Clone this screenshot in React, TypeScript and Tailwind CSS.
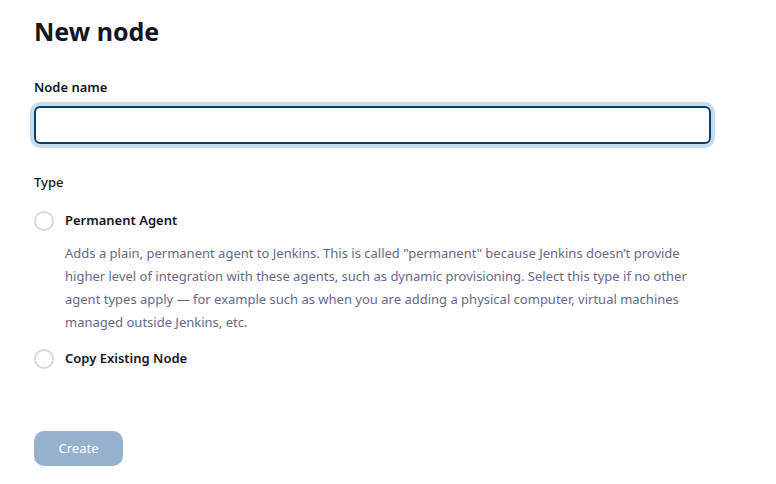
import React, { useState } from "react";

const Radio: React.FC<{ checked: boolean; onClick: () => void; label: string }> = ({
  checked,
  onClick,
  label,
}) => (
  <label className="flex items-center gap-[11px] cursor-pointer" onClick={onClick}>
    <span
      className={`w-[20px] h-[20px] rounded-full border-2 ${
        checked ? "border-[#0b4a75] border-[6px]" : "border-[#d3dbe0]"
      } bg-white`}
    />
    <span className="text-[13px] font-semibold text-[#14141f]">{label}</span>
  </label>
);

export default function App() {
  const [name, setName] = useState("");
  const [type, setType] = useState<string | null>(null);

  return (
    <div className="min-h-screen bg-white px-[34px] pt-[14px] font-['Noto_Sans',sans-serif] text-[#14141f]">
      <h1 className="text-[25px] font-bold leading-[34px]">New node</h1>

      <div className="mt-[29px]">
        <label className="block text-[13px] font-semibold leading-[20px]">Node name</label>
        <input
          autoFocus
          value={name}
          onChange={(e) => setName(e.target.value)}
          className="mt-[9px] block w-[677px] h-[38px] rounded-[6px] border-2 border-[#0b3f63] px-[8px] text-[14px] outline-none ring-[4px] ring-[#c6dcef]"
        />
      </div>

      <div className="mt-[28px]">
        <div className="text-[13px] font-medium leading-[20px]">Type</div>
        <div className="mt-[19px] flex flex-col">
          <Radio checked={type === "perm"} onClick={() => setType("perm")} label="Permanent Agent" />
          <p className="ml-[31px] mt-[11px] w-[640px] text-[13px] leading-[23px] text-[#68688a]">
            Adds a plain, permanent agent to Jenkins. This is called "permanent" because Jenkins
            doesn’t provide higher level of integration with these agents, such as dynamic
            provisioning. Select this type if no other agent types apply — for example such as when
            you are adding a physical computer, virtual machines managed outside Jenkins, etc.
          </p>
          <div className="mt-[15px]">
            <Radio checked={type === "copy"} onClick={() => setType("copy")} label="Copy Existing Node" />
          </div>
        </div>
      </div>

      <button
        disabled={!name || !type}
        className="mt-[62px] h-[35px] w-[89px] rounded-[10px] bg-[#94b1cd] text-[13px] text-white"
      >
        Create
      </button>
    </div>
  );
}
